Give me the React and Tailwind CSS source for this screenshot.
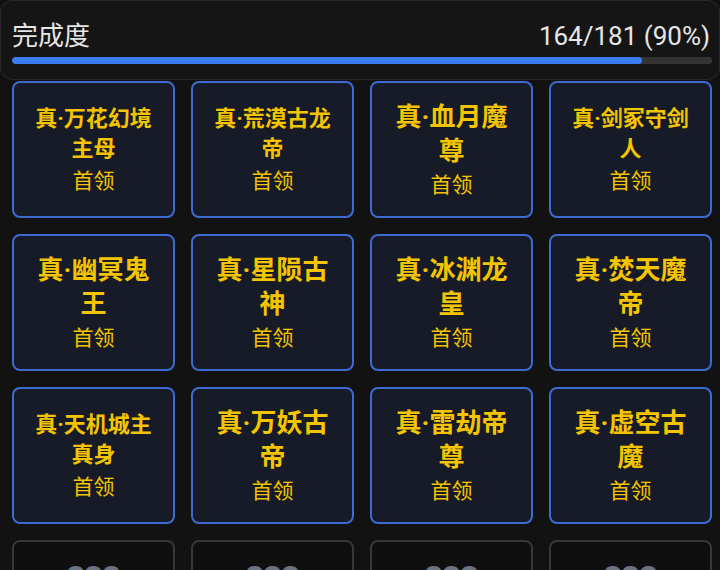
import React from "react";

const bosses = [
  "真·万花幻境主母",
  "真·荒漠古龙帝",
  "真·血月魔尊",
  "真·剑冢守剑人",
  "真·幽冥鬼王",
  "真·星陨古神",
  "真·冰渊龙皇",
  "真·焚天魔帝",
  "真·天机城主真身",
  "真·万妖古帝",
  "真·雷劫帝尊",
  "真·虚空古魔",
];

const done = 164;
const total = 181;
const pct = Math.floor((done / total) * 100);

const BossCard = ({ name }) => {
  // long names get the smaller title size so they wrap into two lines
  const isLong = name.length > 6;
  return (
    <div className="h-[137px] rounded-lg border-2 border-[#3d6bd1] bg-[#161b27] px-[14px] flex flex-col items-center justify-center text-center text-[#f4c400]">
      <div
        className={
          isLong
            ? "text-[22px] leading-[30px] font-bold"
            : "text-[26px] leading-[34px] font-bold"
        }
      >
        {name}
      </div>
      <div className="mt-[2px] text-[21px] leading-[30px]">首领</div>
    </div>
  );
};

const LockedCard = () => (
  <div className="h-[137px] rounded-lg border-2 border-[#383838] bg-[#0f0f0f] flex flex-col items-center pt-[16px] text-center">
    <div className="text-[36px] leading-[44px] font-bold text-[#6b7280]">???</div>
    <div className="text-[21px] leading-[30px] text-[#6b7280]">未知</div>
  </div>
);

export default function App() {
  return (
    <div
      className="w-[720px] h-[570px] overflow-hidden bg-[#121212]"
      style={{ fontFamily: '"Roboto", "Noto Sans CJK SC", sans-serif' }}
    >
      <div className="h-[80px] rounded-xl border border-[#2a2a2a] bg-[#151515] pl-[11px] pr-[7px] pt-[17px]">
        <div className="flex items-center justify-between text-[#e6e6e6]">
          <span className="text-[26px] leading-[36px]">完成度</span>
          <span className="pr-[2px] text-[26px] leading-[36px]">
            {done}/{total} ({pct}%)
          </span>
        </div>
        <div className="mt-[3px] h-[7px] rounded-full bg-[#333333] overflow-hidden">
          <div className="h-full rounded-full bg-[#3b7cf0]" style={{ width: `${pct}%` }} />
        </div>
      </div>

      <div className="grid grid-cols-4 gap-4 pl-[12px] pr-[8px] pt-[1px]">
        {bosses.map((name) => (
          <BossCard key={name} name={name} />
        ))}
        {Array.from({ length: 4 }, (_, i) => (
          <LockedCard key={i} />
        ))}
      </div>
    </div>
  );
}
